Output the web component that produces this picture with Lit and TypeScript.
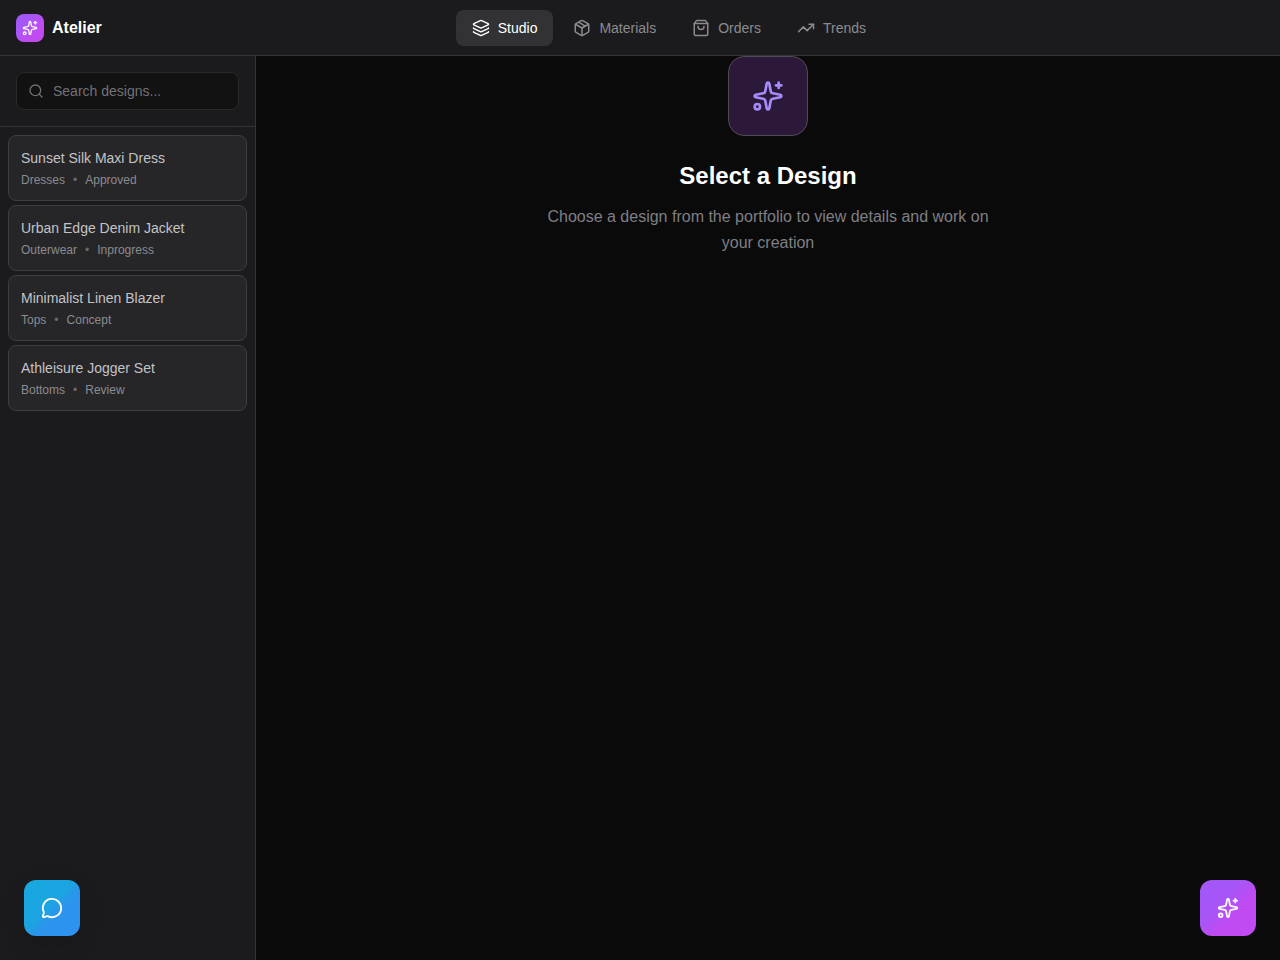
import { LitElement, html, svg, css } from "lit";
import { customElement, property } from "lit/decorators.js";

const ICONS: Record<string, any> = {
  sparkles: svg`<path d="M11.017 2.814a1 1 0 0 1 1.966 0l1.051 5.558a2 2 0 0 0 1.594 1.594l5.558 1.051a1 1 0 0 1 0 1.966l-5.558 1.051a2 2 0 0 0-1.594 1.594l-1.051 5.558a1 1 0 0 1-1.966 0l-1.051-5.558a2 2 0 0 0-1.594-1.594l-5.558-1.051a1 1 0 0 1 0-1.966l5.558-1.051a2 2 0 0 0 1.594-1.594z"/><path d="M20 2v4"/><path d="M22 4h-4"/><circle cx="4" cy="20" r="2"/>`,
  layers: svg`<path d="M12.83 2.18a2 2 0 0 0-1.66 0L2.6 6.08a1 1 0 0 0 0 1.83l8.58 3.91a2 2 0 0 0 1.66 0l8.58-3.9a1 1 0 0 0 0-1.83z"/><path d="M2 12a1 1 0 0 0 .58.91l8.6 3.91a2 2 0 0 0 1.65 0l8.58-3.9A1 1 0 0 0 22 12"/><path d="M2 17a1 1 0 0 0 .58.91l8.6 3.91a2 2 0 0 0 1.65 0l8.58-3.9A1 1 0 0 0 22 17"/>`,
  package: svg`<path d="M11 21.73a2 2 0 0 0 2 0l7-4A2 2 0 0 0 21 16V8a2 2 0 0 0-1-1.73l-7-4a2 2 0 0 0-2 0l-7 4A2 2 0 0 0 3 8v8a2 2 0 0 0 1 1.73z"/><path d="M12 22V12"/><polyline points="3.29 7 12 12 20.71 7"/><path d="m7.5 4.27 9 5.15"/>`,
  bag: svg`<path d="M16 10a4 4 0 0 1-8 0"/><path d="M3.103 6.034h17.794"/><path d="M3.4 5.467a2 2 0 0 0-.4 1.2V20a2 2 0 0 0 2 2h14a2 2 0 0 0 2-2V6.667a2 2 0 0 0-.4-1.2l-2-2.667A2 2 0 0 0 17 2H7a2 2 0 0 0-1.6.8z"/>`,
  trend: svg`<path d="M16 7h6v6"/><path d="m22 7-8.5 8.5-5-5L2 17"/>`,
  search: svg`<path d="m21 21-4.34-4.34"/><circle cx="11" cy="11" r="8"/>`,
  message: svg`<path d="M2.992 16.342a2 2 0 0 1 .094 1.167l-1.065 3.29a1 1 0 0 0 1.236 1.168l3.413-.998a2 2 0 0 1 1.099.092 10 10 0 1 0-4.777-4.719"/>`,
};

@customElement("line-icon")
export class LineIcon extends LitElement {
  @property() name = "";
  @property({ type: Number }) size = 18;
  @property({ type: Number }) weight = 2;
  static styles = css`
    :host { display: block; flex: none; }
    svg { display: block; }
  `;
  render() {
    return html`<svg width=${this.size} height=${this.size} viewBox="0 0 24 24" fill="none" stroke="currentColor"
      stroke-width=${this.weight} stroke-linecap="round" stroke-linejoin="round">${ICONS[this.name]}</svg>`;
  }
}

const NAV = [
  ["layers", "Studio"],
  ["package", "Materials"],
  ["bag", "Orders"],
  ["trend", "Trends"],
];

const DESIGNS = [
  ["Sunset Silk Maxi Dress", "Dresses", "Approved"],
  ["Urban Edge Denim Jacket", "Outerwear", "Inprogress"],
  ["Minimalist Linen Blazer", "Tops", "Concept"],
  ["Athleisure Jogger Set", "Bottoms", "Review"],
];

@customElement("app-root")
export class AppRoot extends LitElement {
  static styles = css`
    :host {
      display: flex; flex-direction: column; height: 100vh; overflow: hidden;
      background: #0a0a0a; color: #fff;
      font-family: "Liberation Sans", Arial, sans-serif;
    }
    * { box-sizing: border-box; }
    button { font: inherit; border: 0; margin: 0; cursor: pointer; }
    header {
      flex: none; height: 56px; padding: 0 16px; background: #1b1b1d;
      border-bottom: 1px solid #333335;
      display: flex; align-items: center; justify-content: space-between;
    }
    .brand { display: flex; align-items: center; gap: 8px; font-size: 16px; font-weight: 700; }
    .logo {
      width: 28px; height: 28px; border-radius: 8px;
      display: grid; place-items: center;
      background: linear-gradient(135deg, #a158f5 0%, #a855f7 35%, #bd4cf3 60%, #c44af2 100%);
    }
    nav { display: flex; gap: 4px; }
    .tab {
      height: 36px; padding: 0 16px; border-radius: 8px;
      display: flex; align-items: center; gap: 8px;
      font-size: 14px; color: #8b8b8f; background: none;
    }
    .tab.active { background: #323234; color: #fff; }
    .end { width: 28px; }
    .body { flex: 1; min-height: 0; display: flex; }
    aside { width: 256px; flex: none; background: #1b1b1d; border-right: 1px solid #333335; }
    .search { padding: 16px; border-bottom: 1px solid #333335; }
    .field {
      height: 38px; border-radius: 8px; background: #121212; border: 1px solid #29292b;
      display: flex; align-items: center; gap: 9px; padding: 0 11px; color: #6f6f74;
    }
    input {
      flex: 1; min-width: 0; border: 0; padding: 0; outline: 0; background: none;
      font: 14px "Liberation Sans", Arial, sans-serif; color: #fff;
    }
    input::placeholder { color: #717176; opacity: 1; }
    .list { padding: 8px; display: flex; flex-direction: column; gap: 4px; }
    .card {
      height: 66px; padding: 12px; border-radius: 8px; text-align: left;
      background: #262628; border: 1px solid #3d3d3f;
    }
    .name { font-size: 14px; line-height: 20px; color: #c3c3c6; }
    .meta { display: flex; gap: 8px; margin-top: 4px; font-size: 12px; line-height: 16px; color: #8b8b8f; }
    .dot { color: #69696d; }
    main { flex: 1; display: flex; flex-direction: column; align-items: center; text-align: center; }
    .hero {
      width: 80px; height: 80px; border-radius: 16px; display: grid; place-items: center;
      background: #2c1838; border: 1px solid #504a57; color: #a78bfa;
    }
    h1 { margin: 24px 0 0; font-size: 24px; line-height: 32px; font-weight: 700; }
    p { margin: 12px 0 0; width: 448px; font-size: 16px; line-height: 26px; color: #7f7f84; }
    .fab {
      position: absolute; bottom: 24px; width: 56px; height: 56px; border-radius: 12px;
      display: grid; place-items: center; padding: 0; color: #fff;
    }
    .chat {
      left: 24px; background: linear-gradient(135deg, #17a8dd 0%, #1ca4e2 45%, #2b94ec 60%, #2f92ef 100%);
      box-shadow: 0 6px 26px rgba(0, 0, 0, 0.14);
    }
    .magic { right: 24px; background: linear-gradient(135deg, #a158f5 0%, #a855f7 40%, #bf4bf3 60%, #c44af2 100%); }
  `;

  render() {
    return html`
      <header>
        <div class="brand">
          <div class="logo"><line-icon name="sparkles" size="16"></line-icon></div>
          <span>Atelier</span>
        </div>
        <nav>
          ${NAV.map(([icon, label], i) => html`<button class="tab ${i === 0 ? "active" : ""}">
            <line-icon name=${icon} size="18"></line-icon><span>${label}</span>
          </button>`)}
        </nav>
        <div class="end"></div>
      </header>
      <div class="body">
        <aside>
          <div class="search">
            <div class="field">
              <line-icon name="search" size="16"></line-icon>
              <input placeholder="Search designs..." />
            </div>
          </div>
          <div class="list">
            ${DESIGNS.map(([name, type, status]) => html`<div class="card">
              <div class="name">${name}</div>
              <div class="meta"><span>${type}</span><span class="dot">•</span><span>${status}</span></div>
            </div>`)}
          </div>
        </aside>
        <main>
          <div class="hero"><line-icon name="sparkles" size="32"></line-icon></div>
          <h1>Select a Design</h1>
          <p>Choose a design from the portfolio to view details and work on your creation</p>
        </main>
      </div>
      <button class="fab chat"><line-icon name="message" size="22"></line-icon></button>
      <button class="fab magic"><line-icon name="sparkles" size="22"></line-icon></button>
    `;
  }
}
